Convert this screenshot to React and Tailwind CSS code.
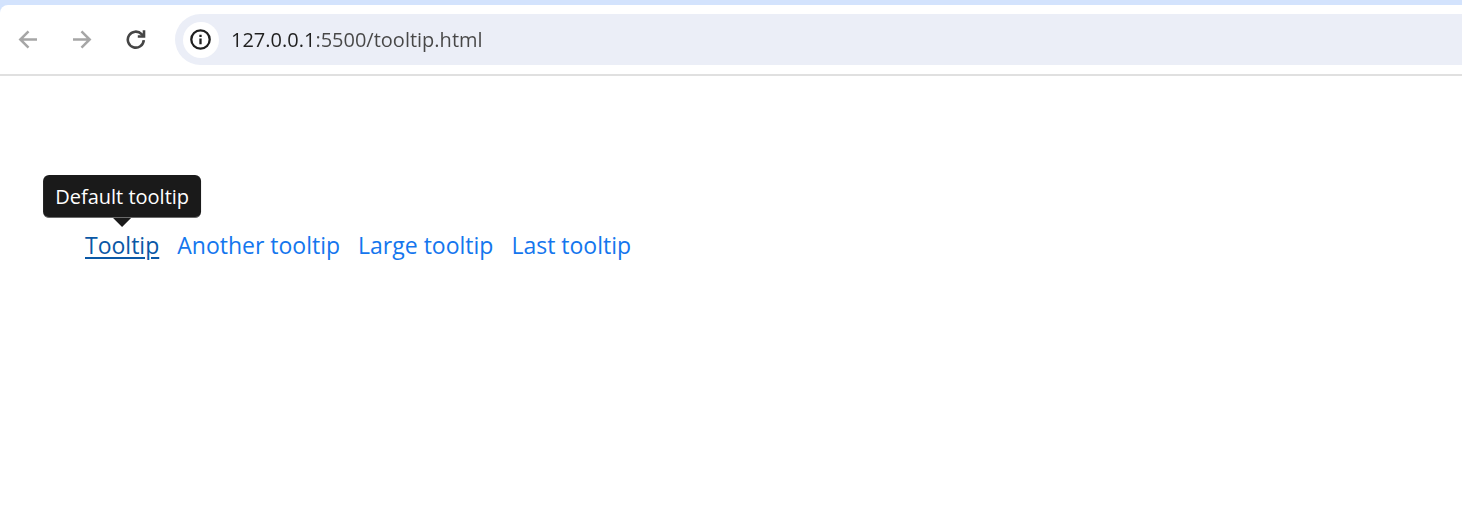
import React from 'react';

const links = ['Another tooltip', 'Large tooltip', 'Last tooltip'];

function ArrowIcon({ flipped = false }) {
  return (
    <svg
      viewBox="0 0 20 20"
      className={flipped ? 'size-5 -scale-x-100' : 'size-5'}
      fill="none"
      stroke="#a6a6a6"
      strokeWidth="2.5"
      aria-hidden="true"
    >
      <path d="M19 9.500H3M10.500 1.300 2.300 9.500l8.200 8.200" />
    </svg>
  );
}

function ReloadIcon() {
  return (
    <svg viewBox="0 0 20 20" className="size-5" fill="none" stroke="#454545" strokeWidth="2.6" aria-hidden="true">
      <path d="M17.800 10.200A8 8 0 1 1 15.600 4.100L17.800 6.300" />
      <path d="M18 0.300V6.500H11.800" />
    </svg>
  );
}

function InfoIcon() {
  return (
    <svg viewBox="0 0 22 22" className="size-[22px]" fill="none" stroke="#1f1f1f" strokeWidth="2.3" aria-hidden="true">
      <circle cx="10.500" cy="10.500" r="9.200" />
      <path d="M10.500 9.500v5.700M10.500 5.700v2.200" />
    </svg>
  );
}

function Toolbar() {
  return (
    <header className="bg-[#d3e3fd] pt-[5px]">
      <div className="flex items-center rounded-tl-lg border-b-2 border-[#e0e0e0] bg-white py-[9px] pl-[18px]">
        <div className="flex items-center gap-[34px]">
          <button type="button" aria-label="Back" disabled>
            <ArrowIcon />
          </button>
          <button type="button" aria-label="Forward" disabled>
            <ArrowIcon flipped />
          </button>
          <button type="button" aria-label="Reload">
            <ReloadIcon />
          </button>
        </div>
        <div className="ml-[29px] flex h-[51px] flex-1 items-center gap-3 rounded-l-full bg-[#ebeef7] pl-2">
          <button
            type="button"
            aria-label="View site information"
            className="flex size-9 items-center justify-center rounded-full bg-white"
          >
            <InfoIcon />
          </button>
          <input
            type="text"
            aria-label="Address"
            defaultValue="127.0.0.1:5500/tooltip.html"
            className="min-w-0 flex-1 bg-[linear-gradient(to_right,#1f1f1f_84px,#474747_84px)] bg-clip-text text-[20px] leading-7 text-transparent caret-black outline-none"
          />
        </div>
      </div>
    </header>
  );
}

export default function App() {
  return (
    <div className="bg-white font-['Open_Sans','Noto_Sans',sans-serif]">
      <Toolbar />
      <main className="px-[85px] pt-[151px]">
        <nav className="flex flex-wrap gap-x-[18px] text-[23px] leading-9">
          <div className="relative">
            <a href="#tooltip" aria-describedby="default-tooltip" className="text-[#0a58a6] underline decoration-2 underline-offset-3">
              Tooltip
            </a>
            <div
              id="default-tooltip"
              role="tooltip"
              className="absolute bottom-full left-1/2 flex -translate-x-1/2 flex-col items-center"
            >
              <div className="rounded-md border-b border-[#6b6b6b] bg-[#1a1a1a] px-3 pt-2 pb-[6px] text-[20px] leading-7 whitespace-nowrap text-white">
                Default tooltip
              </div>
              <div className="h-0 w-0 border-x-[9px] border-t-[9px] border-x-transparent border-t-[#1a1a1a]" />
            </div>
          </div>
          {links.map((label) => (
            <a key={label} href="#tooltip" className="text-[#1476ee]">
              {label}
            </a>
          ))}
        </nav>
      </main>
    </div>
  );
}
